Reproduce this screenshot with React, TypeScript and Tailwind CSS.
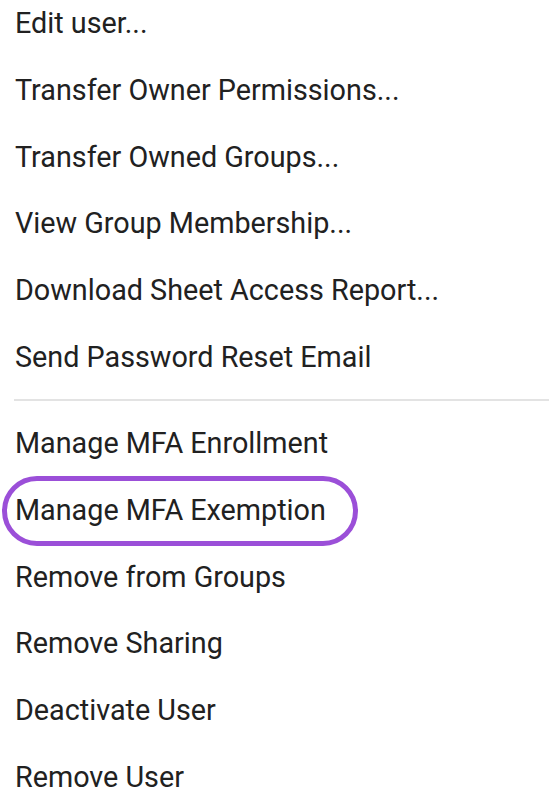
const topItems = [
  "Edit user...",
  "Transfer Owner Permissions...",
  "Transfer Owned Groups...",
  "View Group Membership...",
  "Download Sheet Access Report...",
  "Send Password Reset Email",
]

const bottomItems = [
  "Manage MFA Enrollment",
  "Manage MFA Exemption",
  "Remove from Groups",
  "Remove Sharing",
  "Deactivate User",
  "Remove User",
]

const highlighted = "Manage MFA Exemption"

function MenuItem({ label }: { label: string }) {
  return (
    <li className="relative flex h-[66.67px] items-center pl-[15px]">
      <span className="text-[28.75px] leading-[34px] text-[#212121]">{label}</span>
      {label === highlighted && (
        <span
          aria-hidden="true"
          className="pointer-events-none absolute left-[2px] top-[-1px] h-[70px] w-[356px] rounded-full border-[5px] border-[#9b4fd8]"
        />
      )}
    </li>
  )
}

export default function App() {
  return (
    <div
      className="h-[800px] w-[558px] overflow-hidden bg-white"
      style={{ fontFamily: "Roboto, 'Liberation Sans', sans-serif" }}
    >
      <div className="-mt-[10px]">
        <ul>
          {topItems.map((item) => (
            <MenuItem key={item} label={item} />
          ))}
        </ul>
        <div className="my-[9px] ml-[14px] mr-[9px] h-[2px] bg-[#e3e3e3]" />
        <ul>
          {bottomItems.map((item) => (
            <MenuItem key={item} label={item} />
          ))}
        </ul>
      </div>
    </div>
  )
}
